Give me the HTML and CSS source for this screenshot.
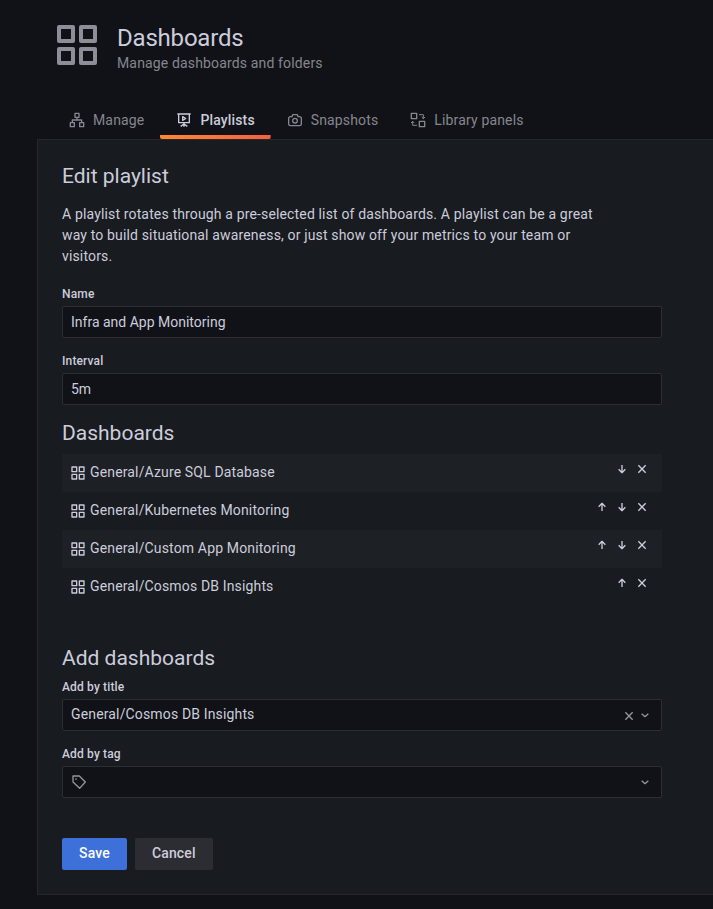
FILE: index.html
```html
<!DOCTYPE html>
<html lang="en">
<head>
<meta charset="utf-8">
<title>Edit playlist</title>
<link rel="stylesheet" href="styles.css">
</head>
<body>
<svg class="defs" width="0" height="0" aria-hidden="true">
  <symbol id="apps" viewBox="0 0 24 24"><path fill="currentColor" d="M10,13H3a1,1,0,0,0-1,1v7a1,1,0,0,0,1,1h7a1,1,0,0,0,1-1V14A1,1,0,0,0,10,13ZM9,20H4V15H9ZM21,2H14a1,1,0,0,0-1,1v7a1,1,0,0,0,1,1h7a1,1,0,0,0,1-1V3A1,1,0,0,0,21,2ZM20,9H15V4h5Zm1,4H14a1,1,0,0,0-1,1v7a1,1,0,0,0,1,1h7a1,1,0,0,0,1-1V14A1,1,0,0,0,21,13Zm-1,7H15V15h5ZM10,2H3A1,1,0,0,0,2,3v7a1,1,0,0,0,1,1h7a1,1,0,0,0,1-1V3A1,1,0,0,0,10,2ZM9,9H4V4H9Z"/></symbol>
  <symbol id="sitemap" viewBox="0 0 24 24"><path d="M9 2h6v6H9zM2 16h6v6H2zM16 16h6v6h-6zM12 8v4M5 16v-4h14v4"/></symbol>
  <symbol id="presentation" viewBox="0 0 24 24"><path d="M2 3h20M4 3v13h16V3M12 16v6M12 18l-5 3.5M12 18l5 3.5M10 7v5.5l4.5-2.75z"/></symbol>
  <symbol id="camera" viewBox="0 0 24 24"><path d="M5 7h2.5l1-3h7l1 3H19a2.5 2.5 0 0 1 2.500 2.500V18a2.500 2.500 0 0 1-2.500 2.500H5A2.500 2.500 0 0 1 2.500 18V9.500A2.500 2.500 0 0 1 5 7z"/><circle cx="12" cy="13" r="3.500"/></symbol>
  <symbol id="library" viewBox="0 0 24 24"><path d="M2 2h8v8H2zM14 14h8v8h-8z"/><path class="thin" d="M13.500 4H20v6M17.500 7.500L20 10l2.500-2.500M10.500 20H4v-6M1.500 16.500L4 14l2.500 2.500"/></symbol>
  <symbol id="down" viewBox="0 0 24 24"><path d="M12 6v11M7 12.500l5 5 5-5"/></symbol>
  <symbol id="up" viewBox="0 0 24 24"><path d="M12 18V7M7 11.500l5-5 5 5"/></symbol>
  <symbol id="times" viewBox="0 0 24 24"><path d="M6.500 6.500l11 11M17.500 6.500l-11 11"/></symbol>
  <symbol id="angle" viewBox="0 0 24 24"><path d="M7 10l5 4.500 5-4.500"/></symbol>
  <symbol id="tag" viewBox="0 0 24 24"><path d="M3 3h9.500l9 9-8.500 9.500-10-9.500z"/><circle class="dot" cx="7.500" cy="7.500" r="1.300"/></symbol>
</svg>

<header class="page-header">
  <svg class="page-icon"><use href="#apps"/></svg>
  <div>
    <h1>Dashboards</h1>
    <div class="subtitle">Manage dashboards and folders</div>
  </div>
</header>

<nav class="tabs">
  <a class="tab"><svg class="icon"><use href="#sitemap"/></svg>Manage</a>
  <a class="tab active"><svg class="icon"><use href="#presentation"/></svg>Playlists</a>
  <a class="tab"><svg class="icon"><use href="#camera"/></svg>Snapshots</a>
  <a class="tab"><svg class="icon"><use href="#library"/></svg>Library panels</a>
</nav>

<main class="panel">
  <h2 class="title">Edit playlist</h2>
  <p class="description">A playlist rotates through a pre-selected list of dashboards. A playlist can be a great way to build situational awareness, or just show off your metrics to your team or visitors.</p>

  <div class="field">
    <div class="label">Name</div>
    <div class="input">Infra and App Monitoring</div>
  </div>
  <div class="field">
    <div class="label">Interval</div>
    <div class="input">5m</div>
  </div>

  <h2 class="list-title">Dashboards</h2>
  <ul class="list">
    <li class="row"><svg class="icon"><use href="#apps"/></svg><span class="name">General/Azure SQL Database</span>
      <span class="actions"><svg><use href="#down"/></svg><svg><use href="#times"/></svg></span></li>
    <li class="row"><svg class="icon"><use href="#apps"/></svg><span class="name">General/Kubernetes Monitoring</span>
      <span class="actions"><svg><use href="#up"/></svg><svg><use href="#down"/></svg><svg><use href="#times"/></svg></span></li>
    <li class="row"><svg class="icon"><use href="#apps"/></svg><span class="name">General/Custom App Monitoring</span>
      <span class="actions"><svg><use href="#up"/></svg><svg><use href="#down"/></svg><svg><use href="#times"/></svg></span></li>
    <li class="row"><svg class="icon"><use href="#apps"/></svg><span class="name">General/Cosmos DB Insights</span>
      <span class="actions"><svg><use href="#up"/></svg><svg><use href="#times"/></svg></span></li>
  </ul>

  <h2 class="add-title">Add dashboards</h2>
  <div class="field">
    <div class="label">Add by title</div>
    <div class="input select"><span class="value">General/Cosmos DB Insights</span><svg class="icon clear"><use href="#times"/></svg><svg class="icon"><use href="#angle"/></svg></div>
  </div>
  <div class="field">
    <div class="label">Add by tag</div>
    <div class="input select"><svg class="icon"><use href="#tag"/></svg><span class="value"></span><svg class="icon"><use href="#angle"/></svg></div>
  </div>

  <div class="buttons">
    <button class="button primary">Save</button>
    <button class="button">Cancel</button>
  </div>
</main>
</body>
</html>
```
FILE: styles.css
```css
* { box-sizing: border-box; }
body {
  margin: 0;
  height: 909px;
  overflow: hidden;
  background: #111217;
  color: #ccccdc;
  font: 400 14px/21px Roboto, sans-serif;
  letter-spacing: 0.15px;
}
h1, h2, p, ul { margin: 0; padding: 0; font-weight: 400; }
svg { flex: none; fill: none; stroke: currentColor; stroke-width: 2; stroke-linejoin: round; }
.defs { position: absolute; }
#apps { stroke: none; }
.thin { stroke-width: 1.5; }
.dot { fill: currentColor; stroke: none; }
.icon { width: 16px; height: 16px; }

.page-header { display: flex; gap: 16px; height: 101px; padding: 21px 0 0 53px; }
.page-icon { width: 48px; height: 48px; color: #8e8e99; }
h1 { font-size: 24px; line-height: 28px; letter-spacing: -0.2px; padding-top: 3px; }
.subtitle { color: #85868f; line-height: 22px; }

.tabs { display: flex; height: 38px; padding-left: 53px; }
.tab { display: flex; align-items: center; gap: 8px; padding: 0 16px; color: #85868f; }
.tab.active {
  color: #ccccdc;
  font-weight: 500;
  background: linear-gradient(270deg, #f55f3e, #ff8833) bottom / 100% 4px no-repeat;
  border-radius: 2px;
}

.panel {
  height: 756px;
  margin-left: 37px;
  padding: 24px;
  background: #181b1f;
  border: 1px solid #25272c;
  border-right: 0;
}
h2 { font-size: 21px; line-height: 24px; letter-spacing: 0; }
.title { margin-bottom: 16px; }
.description { width: 545px; height: 82px; }
.field { width: 600px; height: 67px; }
.label { height: 20px; padding-top: 1px; font-size: 12px; line-height: 15px; font-weight: 500; }
.input {
  height: 32px;
  padding: 0 8px;
  line-height: 30px;
  letter-spacing: 0;
  background: #111217;
  border: 1px solid #2d2e34;
  border-radius: 2px;
}
.list-title { height: 34px; padding-top: 1px; }
.list { width: 600px; list-style: none; }
.row { display: flex; align-items: center; height: 38px; padding: 0 12px 0 8px; }
.row:nth-child(odd) { background: #1d2024; }
.name { flex: 1; margin-left: 4px; padding-bottom: 2px; }
.actions { display: flex; gap: 4px; padding-bottom: 8px; }
.actions svg { width: 16px; height: 16px; }
.add-title { margin-top: 40px; height: 33px; }
.select { display: flex; align-items: center; padding-right: 8px; color: #94959e; letter-spacing: 0.15px; }
.value { flex: 1; padding-bottom: 2px; line-height: 28px; color: #ccccdc; }
.clear { margin-top: 2px; }
.buttons { display: flex; gap: 8px; margin-top: 25px; }
.button {
  height: 32px;
  padding: 0 17px 2px;
  border: 0;
  border-radius: 2px;
  background: #2c2d32;
  color: #ccccdc;
  font: 500 14px/30px Roboto, sans-serif;
  letter-spacing: 0.15px;
}
.primary { background: #3d71d9; color: #fff; }
```
